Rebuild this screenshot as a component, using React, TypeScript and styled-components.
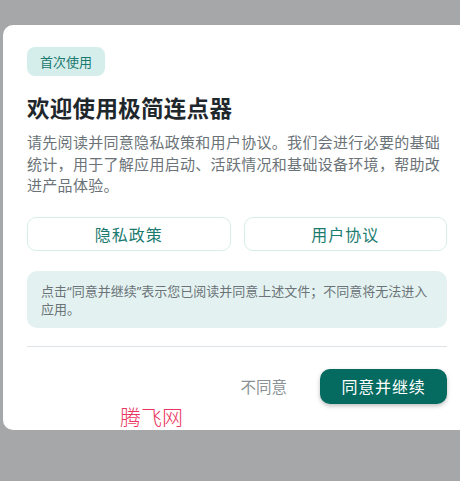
import React from "react";
import styled, { createGlobalStyle } from "styled-components";

const Global = createGlobalStyle`
  html, body {
    margin: 0;
    padding: 0;
    background: #a6a7a9;
    overflow: hidden;
    font-family: "Noto Sans CJK SC", "Noto Sans", sans-serif;
  }
  #root { width: 460px; height: 481px; overflow: hidden; }
`;

const Dialog = styled.div`
  position: relative;
  box-sizing: border-box;
  width: 468px;
  margin: 25px 0 0 3px;
  padding: 22px 24px 26px 24px;
  background: #ffffff;
  border-radius: 10px;
  display: flex;
  flex-direction: column;
  align-items: stretch;
`;

const Badge = styled.div`
  align-self: flex-start;
  height: 29px;
  box-sizing: border-box;
  padding: 0 13px;
  display: flex;
  align-items: center;
  background: #d6eeeb;
  color: #1b7a70;
  font-size: 13px;
  border-radius: 8px;
`;

const Title = styled.h1`
  margin: 15px 0 0 0;
  font-size: 22.5px;
  line-height: 33px;
  font-weight: 700;
  color: #1e272b;
  letter-spacing: 0.3px;
`;

const Body = styled.p`
  margin: 7px 0 0 0;
  font-size: 15px;
  line-height: 21.5px;
  color: #6b7378;
  letter-spacing: 0.3px;
`;

const LinkRow = styled.div`
  margin-top: 21px;
  display: grid;
  grid-template-columns: 1fr 1fr;
  gap: 13px;
`;

const LinkButton = styled.button`
  height: 34px;
  box-sizing: border-box;
  border: 1.5px solid #d8eeeb;
  background: #ffffff;
  border-radius: 9px;
  color: #1b7a70;
  font-family: inherit;
  font-size: 16px;
  letter-spacing: 1px;
  padding: 0;
  cursor: pointer;
`;

const Notice = styled.div`
  margin-top: 20px;
  padding: 11px 14px 10px 14px;
  background: #e3f2f0;
  border-radius: 10px;
  font-family: "Noto Sans", "Noto Sans CJK SC", sans-serif;
  font-size: 13px;
  line-height: 18px;
  color: #6b7378;
`;

const Divider = styled.hr`
  margin: 18px 0 0 0;
  border: none;
  height: 1px;
  background: #dde3e6;
`;

const Footer = styled.div`
  margin-top: 22px;
  display: flex;
  justify-content: flex-end;
  align-items: center;
  gap: 33px;
`;

const TextButton = styled.button`
  border: none;
  background: none;
  padding: 0;
  font-family: inherit;
  font-size: 15.5px;
  color: #8a9195;
  cursor: pointer;
`;

const PrimaryButton = styled.button`
  width: 127px;
  height: 35px;
  border: none;
  border-radius: 10px;
  background: #056b61;
  color: #ffffff;
  font-family: inherit;
  font-size: 16px;
  letter-spacing: 0.8px;
  box-shadow: 0 2px 4px rgba(0, 0, 0, 0.25);
  cursor: pointer;
`;

const Watermark = styled.div`
  position: absolute;
  left: 117px;
  top: 376px;
  font-size: 21px;
  font-weight: 300;
  color: #ea3660;
  pointer-events: none;
`;

export default function App() {
  return (
    <>
      <Global />
      <Dialog>
        <Badge>首次使用</Badge>
        <Title>欢迎使用极简连点器</Title>
        <Body>
          请先阅读并同意隐私政策和用户协议。我们会进行必要的基础统计，用于了解应用启动、活跃情况和基础设备环境，帮助改进产品体验。
        </Body>
        <LinkRow>
          <LinkButton>隐私政策</LinkButton>
          <LinkButton>用户协议</LinkButton>
        </LinkRow>
        <Notice>
          点击“同意并继续”表示您已阅读并同意上述文件；不同意将无法进入应用。
        </Notice>
        <Divider />
        <Footer>
          <TextButton>不同意</TextButton>
          <PrimaryButton>同意并继续</PrimaryButton>
        </Footer>
        <Watermark>腾飞网</Watermark>
      </Dialog>
    </>
  );
}
